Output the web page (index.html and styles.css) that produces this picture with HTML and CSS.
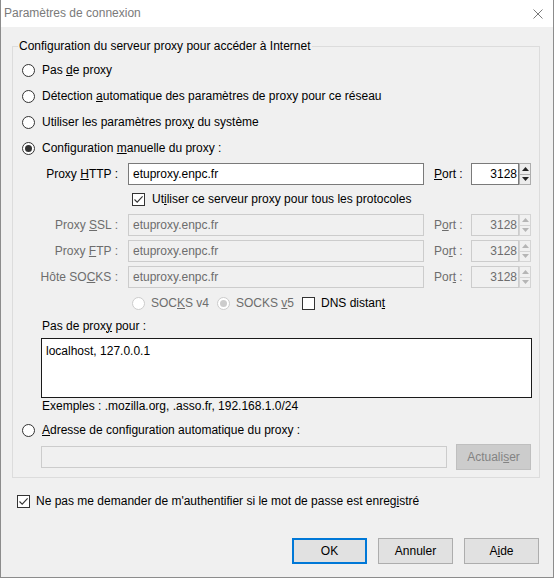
FILE: index.html
```html
<!DOCTYPE html>
<html lang="fr">
<head>
<meta charset="utf-8">
<title>Paramètres de connexion</title>
<link rel="stylesheet" href="styles.css">
</head>
<body>
<div class="window">
  <div class="titlebar">
    <span class="title">Paramètres de connexion</span>
    <svg class="close" width="10" height="10" viewBox="0 0 10 10"><path d="M0.5 0.5 L9.5 9.5 M9.5 0.5 L0.5 9.5" stroke="#7a7a7a" stroke-width="1" fill="none"/></svg>
  </div>
  <div class="content">
    <fieldset class="group">
      <legend>Configuration du serveur proxy pour accéder à Internet</legend>

      <div class="row opt first"><span class="radio"></span><span>Pas <u>d</u>e proxy</span></div>
      <div class="row opt"><span class="radio"></span><span>Détection <u>a</u>utomatique des paramètres de proxy pour ce réseau</span></div>
      <div class="row opt"><span class="radio"></span><span>Utiliser les paramètres prox<u>y</u> du système</span></div>
      <div class="row opt"><span class="radio on"></span><span>Configuration <u>m</u>anuelle du proxy :</span></div>

      <div class="row field">
        <span class="flabel">Proxy <u>H</u>TTP :</span>
        <div class="input host">etuproxy.enpc.fr</div>
        <span class="plabel"><u>P</u>ort :</span>
        <div class="input port">3128</div>
        <div class="spin"><span class="up"><svg width="7" height="4" viewBox="0 0 7 4"><path d="M0 4 L3.5 0 L7 4 Z"/></svg></span><span class="down"><svg width="7" height="4" viewBox="0 0 7 4"><path d="M0 0 L7 0 L3.5 4 Z"/></svg></span></div>
      </div>

      <div class="row chkrow"><span class="check on"><svg width="11" height="11" viewBox="0 0 11 11"><path d="M1.5 5.5 L4.2 8.2 L9.6 2.3" stroke="#333" stroke-width="1.1" fill="none"/></svg></span><span>Ut<u>i</u>liser ce serveur proxy pour tous les protocoles</span></div>

      <div class="row field off">
        <span class="flabel">Proxy <u>S</u>SL :</span>
        <div class="input host">etuproxy.enpc.fr</div>
        <span class="plabel">P<u>o</u>rt :</span>
        <div class="input port">3128</div>
        <div class="spin"><span class="up"><svg width="7" height="4" viewBox="0 0 7 4"><path d="M0 4 L3.5 0 L7 4 Z"/></svg></span><span class="down"><svg width="7" height="4" viewBox="0 0 7 4"><path d="M0 0 L7 0 L3.5 4 Z"/></svg></span></div>
      </div>
      <div class="row field off">
        <span class="flabel">Proxy <u>F</u>TP :</span>
        <div class="input host">etuproxy.enpc.fr</div>
        <span class="plabel">Po<u>r</u>t :</span>
        <div class="input port">3128</div>
        <div class="spin"><span class="up"><svg width="7" height="4" viewBox="0 0 7 4"><path d="M0 4 L3.5 0 L7 4 Z"/></svg></span><span class="down"><svg width="7" height="4" viewBox="0 0 7 4"><path d="M0 0 L7 0 L3.5 4 Z"/></svg></span></div>
      </div>
      <div class="row field off">
        <span class="flabel">Hôte SO<u>C</u>KS :</span>
        <div class="input host">etuproxy.enpc.fr</div>
        <span class="plabel">Por<u>t</u> :</span>
        <div class="input port">3128</div>
        <div class="spin"><span class="up"><svg width="7" height="4" viewBox="0 0 7 4"><path d="M0 4 L3.5 0 L7 4 Z"/></svg></span><span class="down"><svg width="7" height="4" viewBox="0 0 7 4"><path d="M0 0 L7 0 L3.5 4 Z"/></svg></span></div>
      </div>

      <div class="row socks">
        <div class="sitem off"><span class="radio"></span><span>SOC<u>K</u>S v4</span></div>
        <div class="sitem off"><span class="radio on"></span><span>SOCKS <u>v</u>5</span></div>
        <div class="sitem"><span class="check"></span><span>DNS distan<u>t</u></span></div>
      </div>

      <div class="row nplabel"><span>Pas de prox<u>y</u> pour :</span></div>
      <div class="textarea">localhost, 127.0.0.1</div>
      <div class="row examples"><span>Exemples : .mozilla.org, .asso.fr, 192.168.1.0/24</span></div>

      <div class="row opt auto"><span class="radio"></span><span><u>A</u>dresse de configuration automatique du proxy :</span></div>
      <div class="row autorow off">
        <div class="input url"></div>
        <div class="btn disabled">Actuali<u>s</u>er</div>
      </div>
    </fieldset>

    <div class="row bottomchk"><span class="check on"><svg width="11" height="11" viewBox="0 0 11 11"><path d="M1.5 5.5 L4.2 8.2 L9.6 2.3" stroke="#333" stroke-width="1.1" fill="none"/></svg></span><span>Ne pas me demander de m'authentifier si le mot de passe est enreg<u>i</u>stré</span></div>

    <div class="buttons">
      <div class="btn default">OK</div>
      <div class="btn">Annuler</div>
      <div class="btn">A<u>i</u>de</div>
    </div>
  </div>
</div>
</body>
</html>
```

FILE: styles.css
```css
* { box-sizing: border-box; }

html, body {
  margin: 0;
  padding: 0;
  background: #f0f0f0;
}

body {
  font-family: "Liberation Sans", Arial, sans-serif;
  font-size: 12px;
  line-height: 15px;
  color: #000;
}

u {
  text-decoration: underline;
  text-underline-offset: 1px;
  text-decoration-thickness: 1px;
}

.window {
  width: 554px;
  height: 578px;
  background: #f0f0f0;
  border-left: 1px solid #8c8c8c;
  border-right: 1px solid #8c8c8c;
  border-bottom: 1px solid #8c8c8c;
  overflow: hidden;
}

.titlebar {
  height: 27px;
  background: #fff;
  display: flex;
  align-items: center;
  justify-content: space-between;
  padding: 0 10px 0 3px;
}

.title {
  color: #7a7a7a;
  font-size: 12px;
}

.content {
  padding: 12px 13px 0 11px;
}

.group {
  margin: 0;
  padding: 0 0 6px 0;
  width: 528px;
  border: 1px solid #dcdcdc;
  min-width: 0;
}

.group legend {
  margin-left: 5px;
  padding: 0 1px;
  line-height: 15px;
}

.row {
  display: flex;
  align-items: center;
  white-space: nowrap;
}

.opt {
  height: 26px;
  padding-left: 9px;
  gap: 7px;
}

.opt.first { margin-top: 3px; }
.opt.auto { margin-top: 3px; }

.radio {
  width: 13px;
  height: 13px;
  flex: none;
  border: 1px solid #333;
  border-radius: 50%;
  background: #fff;
  display: flex;
  align-items: center;
  justify-content: center;
}

.radio.on::after {
  content: "";
  width: 7px;
  height: 7px;
  border-radius: 50%;
  background: #333;
}

.off .radio { border-color: #cccccc; }
.off .radio.on::after { background: #cccccc; }

.check {
  width: 13px;
  height: 13px;
  flex: none;
  border: 1px solid #333;
  background: #fff;
  display: flex;
  align-items: center;
  justify-content: center;
}

.check svg { display: block; }

.field {
  height: 26px;
}

.flabel {
  width: 105px;
  text-align: right;
  margin-right: 10px;
}

.input {
  height: 22px;
  border: 1px solid #7a7a7a;
  background: #fff;
  padding: 0 4px;
  display: flex;
  align-items: center;
}

.input.host { width: 296px; }

.plabel {
  width: 37px;
  margin-left: 10px;
}

.input.port {
  width: 48px;
  justify-content: flex-end;
  padding: 0 1px 0 2px;
}

.spin {
  width: 12px;
  height: 22px;
  display: flex;
  flex-direction: column;
  border: 1px solid #adadad;
  background: #ececec;
}

.spin span {
  flex: 1;
  display: flex;
  align-items: center;
  justify-content: center;
}

.spin .up { border-bottom: 1px solid #adadad; }

.spin svg { display: block; fill: #222; }

.off { color: #6d6d6d; }

.off .input {
  border-color: #cccccc;
  background: #f0f0f0;
}

.off .spin {
  border-color: #d4d4d4;
  background: #f0f0f0;
}

.off .spin .up { border-bottom-color: #d4d4d4; }
.off .spin svg { fill: #b5b5b5; }

.chkrow {
  height: 25px;
  padding-left: 119px;
  gap: 7px;
}

.socks {
  height: 26px;
  padding-left: 119px;
}

.sitem {
  display: flex;
  align-items: center;
  gap: 6px;
  width: 85px;
}

.nplabel {
  height: 20px;
  padding-left: 29px;
}

.textarea {
  margin: 2px 0 0 28px;
  width: 491px;
  height: 60px;
  background: #fff;
  border: 1px solid #1a1a1a;
  padding: 5px 4px;
}

.examples {
  height: 16px;
  padding-left: 29px;
}

.autorow {
  height: 28px;
  padding-left: 28px;
  gap: 9px;
}

.input.url { width: 406px; }

.btn {
  width: 75px;
  height: 26px;
  border: 1px solid #adadad;
  background: #e1e1e1;
  display: flex;
  align-items: center;
  justify-content: center;
  color: #000;
}

.btn.disabled {
  background: #cccccc;
  border-color: #bfbfbf;
  color: #838383;
}

.btn.default {
  border: 2px solid #0078d7;
}

.bottomchk {
  height: 26px;
  margin-top: 10px;
  padding-left: 5px;
  gap: 6px;
}

.buttons {
  display: flex;
  justify-content: flex-end;
  gap: 11px;
  margin-top: 24px;
  padding-right: 1px;
}
```
